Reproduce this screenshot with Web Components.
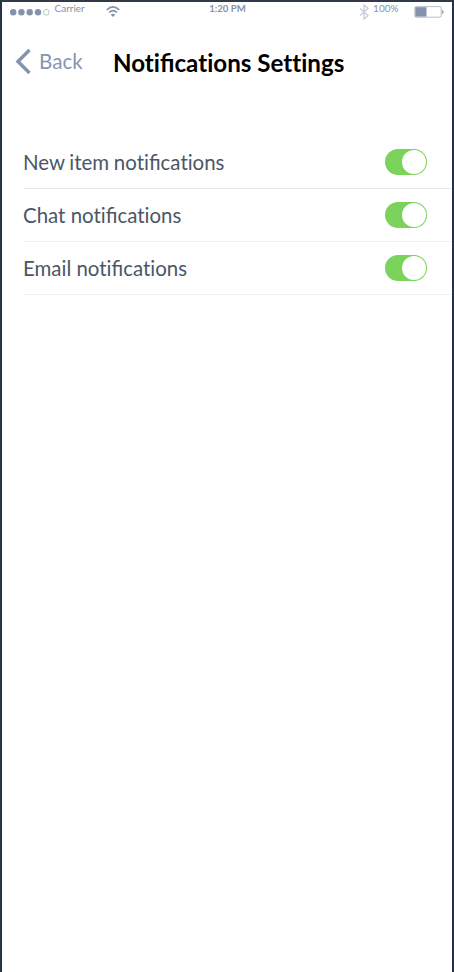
<!DOCTYPE html>
<html lang="en">
<head>
<meta charset="utf-8">
<title>Notifications Settings</title>
<style>
html, body { margin: 0; height: 100%; overflow: hidden; background: #fff; }
body { font-family: Lato, "Liberation Sans", sans-serif; font-variant-ligatures: none; }
.fi { font-variant-ligatures: normal; }
</style>
</head>
<body>
<phone-screen>
  <status-bar slot="status"></status-bar>
  <nav-header slot="header" back="Back">Noti<span class="fi">fi</span>cations Settings</nav-header>
  <setting-row style="--line:#e6eaf2;--word-gap:-.5px">New item noti<span class="fi">fi</span>cations</setting-row>
  <setting-row>Chat noti<span class="fi">fi</span>cations</setting-row>
  <setting-row>Email noti<span class="fi">fi</span>cations</setting-row>
</phone-screen>
<script>
const define = (name, html, setup) => customElements.define(name, class extends HTMLElement {
  constructor() {
    super();
    this.attachShadow({ mode: "open" }).innerHTML = html;
  }
  connectedCallback() { if (setup) setup(this); }
});

define("toggle-switch", `
<style>
  :host { display: flex; flex: none; box-sizing: border-box; width: 42px; height: 26px; padding: 1px 1px 1px 0; border-radius: 13px; background: #7bd35c; justify-content: flex-end; }
  i { width: 24px; height: 24px; border-radius: 50%; background: #fff; }
</style><i></i>`);

define("setting-row", `
<style>
  :host { display: flex; box-sizing: border-box; height: 52.8px; margin-left: 21.5px; padding-right: 25px; align-items: center; justify-content: space-between; border-bottom: 1px solid var(--line, #f0f1f3); color: #4a5766; font-size: 20.45px; line-height: 26px; white-space: nowrap; }
  span { margin-left: -.5px; word-spacing: var(--word-gap, 0px); }
</style><span><slot></slot></span><toggle-switch></toggle-switch>`);

define("nav-header", `
<style>
  :host { display: flex; height: 114.4px; box-sizing: border-box; padding: 26px 0 0 13px; align-items: flex-start; white-space: nowrap; }
  svg { flex: none; width: 16px; height: 26px; }
  span { width: 74px; margin-left: 8px; color: #8796af; font-size: 20.6px; line-height: 26px; }
  h1 { margin: 1px 0 0; color: #000; font-size: 24.15px; font-weight: 700; line-height: 28px; }
</style>
<svg viewBox="0 0 16 26"><path d="M14.5 2 3 13.5 14.5 25" fill="none" stroke="#8393ac" stroke-width="3.5"/></svg>
<span></span><h1><slot></slot></h1>`, el => {
  el.shadowRoot.querySelector("span").textContent = el.getAttribute("back");
});

define("status-bar", `
<style>
  :host { display: grid; grid-template-columns: 1fr auto 1fr; height: 20px; color: #8393ac; font-size: 10px; line-height: 14px; white-space: nowrap; }
  div { display: flex; align-items: flex-start; }
  span { margin-top: -1px; }
  .right { justify-content: flex-end; padding-right: 8px; }
  .dots { width: 41px; height: 8px; margin: 6px 4.5px 0 7px; }
  .wifi { width: 14px; height: 12px; margin: 4px 0 0 21.5px; }
  .bt { width: 10px; height: 16px; margin: 2px 4px 0 0; }
  .battery { width: 30px; height: 12px; margin: 4px 0 0 15.5px; }
  .time { margin-top: 0; font-weight: 700; font-size: 9.6px; padding-left: 1px; }
</style>
<div>
  <svg class="dots" viewBox="0 0 41 8"><g fill="#8393ac"><circle cx="4.2" cy="4.3" r="3.2"/><circle cx="12.4" cy="4.3" r="3.2"/><circle cx="20.7" cy="4.3" r="3.2"/><circle cx="29" cy="4.3" r="3.2"/></g><circle cx="37.3" cy="4.3" r="2.9" fill="none" stroke="#a9b4c5" stroke-width=".8"/></svg>
  <span class="carrier">Carrier</span>
  <svg class="wifi" viewBox="0 0 14 12"><g fill="none" stroke="#8393ac" stroke-width="1.7"><path d="M.7 4Q7-2.2 13.3 4M3 6.5Q7 2.7 11 6.5"/></g><path d="M4.6 8.5Q7 6.8 9.4 8.5L7 11Z" fill="#8393ac"/></svg>
</div>
<div><span class="time">1:20 PM</span></div>
<div class="right">
  <svg class="bt" viewBox="0 0 10 16"><path d="m1 4.5 8 7L5 15V1l4 3.5-8 7" fill="none" stroke="#c7cedb" stroke-width="1.4"/></svg>
  <span>100%</span>
  <svg class="battery" viewBox="0 0 30 12"><rect x=".8" y=".6" width="26.4" height="10.6" rx="1.4" fill="#fff" stroke="#b5becd"/><path d="M1.3 1.2H12.5V10.6H1.3Z" fill="#8393ac"/><path d="M28.2 4V8Q29.7 7.5 29.7 6T28.2 4Z" fill="#8393ac"/></svg>
</div>`);

define("phone-screen", `
<style>
  :host { display: flex; flex-direction: column; box-sizing: border-box; height: 972px; border: 2px solid #273344; border-top-color: #303b47; border-bottom: 0; background: #fff; }
</style><slot name="status"></slot><slot name="header"></slot><main><slot></slot></main>`);
</script>
</body>
</html>
